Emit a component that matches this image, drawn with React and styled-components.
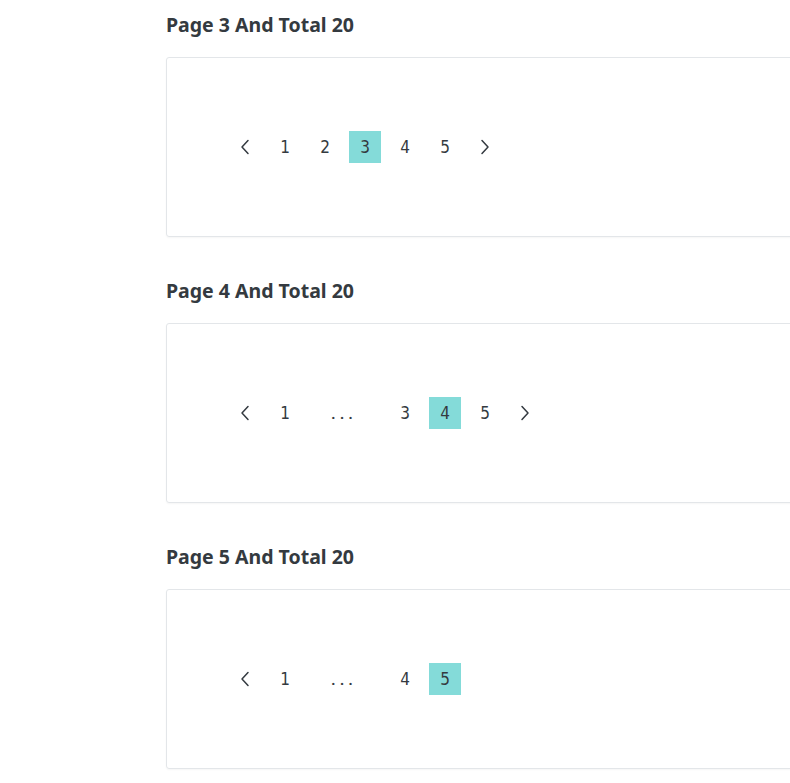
import React from "react";
import styled, { createGlobalStyle } from "styled-components";

const GlobalStyle = createGlobalStyle`
  html, body {
    margin: 0;
    padding: 0;
    background: #ffffff;
    overflow: hidden;
  }
`;

const Page = styled.div`
  display: flex;
  flex-direction: column;
  padding: 12px 0 0 166px;
  width: 800px;
`;

const Section = styled.section`
  display: flex;
  flex-direction: column;
  margin-bottom: 41px;
`;

const Title = styled.h3`
  margin: 0 0 19px;
  font-family: "Noto Sans", "Open Sans", sans-serif;
  font-weight: 700;
  font-size: 19.5px;
  line-height: 26px;
  color: #343a40;
`;

const Card = styled.div`
  display: flex;
  align-items: center;
  height: 178px;
  padding: 0 0 0 58px;
  border: 1px solid #e3e6e9;
  border-radius: 3px;
  box-shadow: 0 1px 2px rgba(0, 0, 0, 0.04);
`;

const List = styled.ul`
  display: flex;
  margin: 0;
  padding: 0;
  list-style: none;
`;

const Item = styled.li`
  display: flex;
  align-items: center;
  justify-content: center;
  width: ${(props) => (props.wide ? "80px" : "40px")};
  height: 32px;
`;

const PageButton = styled.button`
  display: flex;
  align-items: center;
  justify-content: center;
  width: 32px;
  height: 32px;
  padding: 0;
  border: 0;
  border-radius: 0;
  background: ${(props) => (props.active ? "#84dbd9" : "transparent")};
  color: #343a40;
  font-family: "Liberation Sans Narrow", "DejaVu Sans Condensed", "Roboto", sans-serif;
  font-size: 17px;
  cursor: pointer;
`;

const Dots = styled.span`
  font-family: "Roboto", "Liberation Sans", sans-serif;
  font-size: 17px;
  font-weight: 500;
  letter-spacing: 4px;
  margin-left: -2px;
  color: #343a40;
`;

const Chevron = ({ dir }) => (
  <svg width="10" height="16" viewBox="0 0 10 16" fill="none">
    <path
      d={dir === "left" ? "M8 1.5 2 8 8 14.5" : "M2 1.5 8 8 2 14.5"}
      stroke="#343a40"
      strokeWidth="1.5"
      strokeLinecap="round"
      strokeLinejoin="round"
    />
  </svg>
);

const pagesFor = (current) => {
  if (current <= 3) return [1, 2, 3, 4, 5];
  const last = Math.min(current + 1, 5);
  const list = [1, "dots"];
  for (let p = current - 1; p <= last; p += 1) list.push(p);
  return list;
};

const Pagination = ({ current }) => {
  const pages = pagesFor(current);
  const showNext = current < 5;

  return (
    <List>
      <Item>
        <PageButton aria-label="Previous">
          <Chevron dir="left" />
        </PageButton>
      </Item>
      {pages.map((p) =>
        p === "dots" ? (
          <Item key="dots" wide>
            <Dots>...</Dots>
          </Item>
        ) : (
          <Item key={p}>
            <PageButton active={p === current}>{p}</PageButton>
          </Item>
        )
      )}
      {showNext && (
        <Item>
          <PageButton aria-label="Next">
            <Chevron dir="right" />
          </PageButton>
        </Item>
      )}
    </List>
  );
};

const examples = [3, 4, 5];

export default function App() {
  return (
    <>
      <GlobalStyle />
      <Page>
        {examples.map((current) => (
          <Section key={current}>
            <Title>Page {current} And Total 20</Title>
            <Card>
              <Pagination current={current} />
            </Card>
          </Section>
        ))}
      </Page>
    </>
  );
}
